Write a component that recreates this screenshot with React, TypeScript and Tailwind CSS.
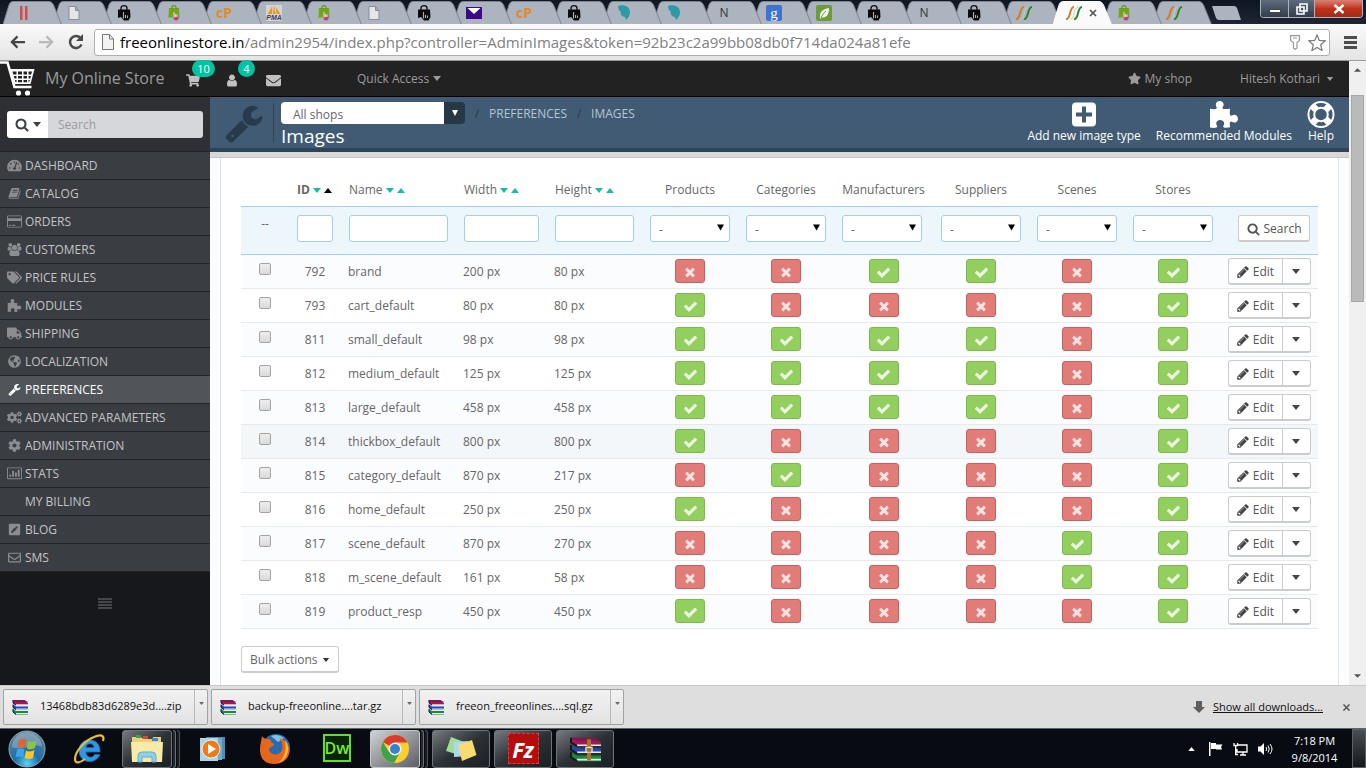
import React from "react";
import {
  FaCog,
  FaCogs,
  FaEnvelope,
  FaGlobeAmericas,
  FaPenSquare,
  FaRegEnvelope,
  FaShoppingCart,
  FaStar,
  FaTachometerAlt,
  FaTags,
  FaTruck,
} from "react-icons/fa";

type IconProps = { className?: string };

/* ---------- glyph icons ---------- */

function glyph(d: string, viewBox = "0 0 1792 1792") {
  return function Glyph({ className }: IconProps) {
    return (
      <svg viewBox={viewBox} fill="currentColor" aria-hidden="true" className={className}>
        <path d={d} />
      </svg>
    );
  };
}

const CheckIcon = glyph(
  "M1671 566q0 40-28 68l-724 724-136 136q-28 28-68 28t-68-28l-136-136-362-362q-28-28-28-68t28-68l136-136q28-28 68-28t68 28l294 295 656-657q28-28 68-28t68 28l136 136q28 28 28 68z"
);
const TimesIcon = glyph(
  "M1490 1322q0 40-28 68l-136 136q-28 28-68 28t-68-28l-294-294-294 294q-28 28-68 28t-68-28l-136-136q-28-28-28-68t28-68l294-294-294-294q-28-28-28-68t28-68l136-136q28-28 68-28t68 28l294 294 294-294q28-28 68-28t68 28l136 136q28 28 28 68t-28 68l-294 294 294 294q28 28 28 68z"
);
const SearchIcon = glyph(
  "M1216 832q0-185-131.500-316.500t-316.500-131.500-316.500 131.500-131.500 316.500 131.500 316.500 316.500 131.500 316.500-131.500 131.500-316.500zm512 832q0 52-38 90t-90 38q-54 0-90-38l-343-342q-179 124-399 124-143 0-273.500-55.500t-225-150-150-225-55.500-273.500 55.500-273.500 150-225 225-150 273.500-55.500 273.500 55.500 225 150 150 225 55.500 273.500q0 220-124 399l343 343q37 37 37 90z",
  "0 64 1792 1792"
);
const UserIcon = glyph(
  "M1536 1399q0 109-62.500 187t-150.500 78h-854q-88 0-150.500-78t-62.500-187q0-85 8.500-160.500t31.500-152 58.500-131 94-89 134.500-34.500q131 128 313 128t313-128q76 0 134.500 34.500t94 89 58.500 131 31.500 152 8.500 160.500zm-256-887q0 159-112.500 271.500t-271.500 112.500-271.500-112.500-112.500-271.500 112.500-271.500 271.500-112.500 271.500 112.500 112.500 271.500z",
  "128 64 1536 1664"
);
const WrenchIcon = glyph(
  "M448 1472q0-26-19-45t-45-19-45 19-19 45 19 45 45 19 45-19 19-45zm644-420l-682 682q-37 37-90 37-52 0-91-37l-106-108q-38-36-38-90 0-53 38-91l681-681q39 98 114.500 173.500t173.500 114.500zm634-435q0 39-23 106-47 134-164.500 217.500t-258.500 83.500q-185 0-316.500-131.500t-131.500-316.500 131.500-316.500 316.500-131.500q58 0 121.500 16.500t107.500 46.500q16 11 16 28t-16 28l-293 169v224l193 107q5-3 79-48.500t135.500-81 70.500-35.500q15 0 23.500 10t8.500 25z"
);
const LifeRingIcon = glyph(
  "M896 0q182 0 348 71t286 191 191 286 71 348-71 348-191 286-286 191-348 71-348-71-286-191-191-286-71-348 71-348 191-286 286-191 348-71zm0 128q-190 0-361 90l194 194q82-28 167-28t167 28l194-194q-171-90-361-90zm-678 1129l194-194q-28-82-28-167t28-167l-194-194q-90 171-90 361t90 361zm678 407q190 0 361-90l-194-194q-82 28-167 28t-167-28l-194 194q171 90 361 90zm0-384q159 0 271.5-112.5t112.5-271.500-112.500-271.500-271.500-112.500-271.500 112.500-112.500 271.500 112.500 271.500 271.500 112.500zm484-217l194 194q90-171 90-361t-90-361l-194 194q28 82 28 167t-28 167z"
);
const BookIcon = glyph(
  "M1703 478q40 57 18 129l-275 906q-19 64-76.500 107.500t-122.500 43.500h-923q-77 0-148.500-53.500t-99.500-131.500q-24-67-2-127 0-4 3-27t4-37q1-8-3-21.500t-3-19.500q2-11 8-21t16.500-23.500 16.500-23.500q23-38 45-91.500t30-91.500q3-10 .5-30t-.5-28q3-11 17-28t17-23q21-36 42-92t25-90q1-9-2.500-32t.5-28q4-13 22-30.500t22-22.500q19-26 42.500-84.500t27.500-96.500q1-8-3-25.500t-2-26.500q2-8 9-18t18-23 17-21q8-12 16.500-30.500t15-35 16-36 19.500-32 26.500-23.500 36-11.500 47.500 5.500l-1 3q38-9 51-9h761q74 0 114 56t18 130l-274 906q-36 119-71.500 153.500t-128.500 34.500h-869q-27 0-38 15-11 16-1 43 24 70 144 70h923q29 0 56-15.500t35-41.500l300-987q7-22 5-57 38 15 59 43zm-1064 2q-4 13 2 22.500t20 9.500h608q13 0 25.500-9.500t16.500-22.500l21-64q4-13-2-22.500t-20-9.500h-608q-13 0-25.500 9.500t-16.500 22.500zm-83 256q-4 13 2 22.500t20 9.500h608q13 0 25.500-9.500t16.500-22.500l21-64q4-13-2-22.500t-20-9.500h-608q-13 0-25.500 9.500t-16.500 22.500z"
);
const PencilIcon = glyph(
  "M491 1536l91-91-235-235-91 91v107h128v128h107zm523-928q0-22-22-22-10 0-17 7l-542 542q-7 7-7 17 0 22 22 22 10 0 17-7l542-542q7-7 7-17zm-54-192l416 416-832 832h-416v-416zm683 96q0 53-37 90l-166 166-416-416 166-165q36-38 90-38 53 0 91 38l235 234q37 39 37 91z",
  "96 128 1580 1580"
);
const UsersIcon = glyph(
  "M657 896q-162 5-265 128h-134q-82 0-138-40.500t-56-118.500q0-353 124-353 6 0 43.500 21t97.500 42.500 119 21.500q67 0 133-23-5 37-5 66 0 159 93 287zm1071 637q0 120-73 189.500t-194 69.500h-874q-121 0-194-69.500t-73-189.500q0-53 3.500-103.500t14-109 26.500-108.500 43-97.500 62-81 85.500-53.500 111.500-20q10 0 43 21.500t73 48 107 48 135 21.500 135-21.500 107-48 73-48 43-21.500q61 0 111.500 20t85.500 53.500 62 81 43 97.500 26.500 108.500 14 109 3.500 103.500zm-1024-1277q0 106-75 181t-181 75-181-75-75-181 75-181 181-75 181 75 75 181zm704 384q0 159-112.500 271.500t-271.500 112.500-271.500-112.500-112.500-271.500 112.500-271.500 271.500-112.500 271.500 112.500 112.500 271.500zm576 225q0 78-56 118.500t-138 40.500h-134q-103-123-265-128 93-128 93-287 0-29-5-66 66 23 133 23 59 0 119-21.500t97.500-42.500 43.500-21q124 0 124 353zm-128-609q0 106-75 181t-181 75-181-75-75-181 75-181 181-75 181 75 75 181z",
  "64 0 1920 1792"
);
const PuzzleIcon = glyph(
  "M0 7.500c2 .6 6.500.8 6.500-.8C6.500 5.500 5.600 5 5.600 3.500 5.600 1.300 7.400 0 9.300 0s3.900 1.300 3.900 3.500c0 1.500-1.200 2-1.200 3.200 0 1.500 3.800 1.200 7.400.7-.4 2.600-.7 6.800.8 6.800 1.200 0 1.700-1 3.100-1 2.200 0 3.700 1.700 3.700 3.800s-1.500 3.800-3.600 3.800c-1.500 0-2-1-3.200-1-1.500 0-1.200 3-.8 5.600-2.500.4-6.700.9-6.700-.8 0-1.200 1-1.600 1-3 0-2-1.800-3.200-3.900-3.200S6 19.600 6 21.600c0 1.400 1 1.800 1 3 0 1.700-4.300 1.400-7 1z",
  "0 0 27 26"
);

function Caret({ className }: IconProps) {
  return (
    <svg viewBox="0 0 8 5" fill="currentColor" aria-hidden="true" className={className}>
      <path d="M0 0h8L4 5z" />
    </svg>
  );
}

function CardIcon({ className }: IconProps) {
  return (
    <svg viewBox="0 0 16 13" fill="currentColor" aria-hidden="true" className={className}>
      <path d="M1.500 0h13A1.500 1.500 0 0 1 16 1.500v10a1.500 1.500 0 0 1-1.500 1.500h-13A1.500 1.500 0 0 1 0 11.500v-10A1.500 1.500 0 0 1 1.500 0zM1 1v2h14V1zM1 6v6h14V6zM2 10h2v1H2zM5 10h4v1H5z" fillRule="evenodd" />
    </svg>
  );
}

function StatsIcon({ className }: IconProps) {
  return (
    <svg viewBox="0 0 16 13" fill="currentColor" aria-hidden="true" className={className}>
      <path d="M1 0h14a1 1 0 0 1 1 1v10.500a1 1 0 0 1-1 1H1a1 1 0 0 1-1-1V1a1 1 0 0 1 1-1zM1 1v10.500h14V1zM2.500 7.500h2V10h-2zM5.500 3.500h2V10h-2zM8.500 5.500h2V10h-2zM11.500 2.500h2V10h-2z" fillRule="evenodd" />
    </svg>
  );
}

function CartLogo({ className }: IconProps) {
  return (
    <svg viewBox="0 0 36 36" aria-hidden="true" className={className}>
      <path d="M0 1.500h7.500l7 24.500h17" fill="none" stroke="#fff" strokeWidth="2.600" />
      <path d="M10 8h24.500l-4 15H14.500z" fill="#fff" />
      <path d="M12.500 10.500h4v3h-3.200zm5.500 0h4v3h-4zm5.500 0h3.500v3h-3.500zm5 0h3.500l-.8 3h-2.700zM13.800 15h2.700v2.500h-2zm4.200 0h4v2.500h-4zm5.500 0h3.500v2.500h-3.500zm5 0h2.500l-.8 2.500h-1.700zM15 19h1.500v2.200h-1zm3 0h4v2.200h-4zm5.500 0h3.500v2.200h-3.500zm5 0h1.300l-.6 2.200h-.7z" fill="#222" />
      <circle cx="18.500" cy="32" r="2.600" fill="#fff" />
      <circle cx="27.500" cy="32" r="2.600" fill="#fff" />
    </svg>
  );
}

/* ---------- browser chrome ---------- */

type Favicon = "bars" | "page" | "bag" | "green" | "cp" | "pma" | "mail" | "teal" | "n" | "google" | "leaf" | "ff";

const tabs: Favicon[] = [
  "bars", "page", "bag", "green", "cp", "pma", "green", "page", "bag", "mail", "cp", "bag",
  "teal", "teal", "n", "google", "leaf", "bag", "n", "bag", "ff", "ff", "green", "ff",
];
const ACTIVE_TAB = 21;

function FaviconMark({ kind }: { kind: Favicon }) {
  if (kind === "cp")
    return <b className="font-['Open_Sans',sans-serif] text-[14px] leading-4 text-[#e08a2c]">cP</b>;
  if (kind === "n")
    return <span className="font-['Open_Sans',sans-serif] text-[12px] leading-4 text-[#333]">N</span>;
  if (kind === "google")
    return (
      <span className="flex h-4 w-4 items-center justify-center rounded-[2px] bg-[#3f72d0] font-['Liberation_Serif',serif] text-[15px] leading-3 text-white">
        g
      </span>
    );
  if (kind === "pma")
    return (
      <span className="flex h-4 w-4 flex-col items-center bg-[#d4d4d4]">
        <svg viewBox="0 0 16 10" className="h-[9px] w-4" aria-hidden="true">
          <path d="M1 10 6 1v9zM7 10 8 0l2 10zM11 10l-1-8 5 8z" fill="#e8961e" />
        </svg>
        <b className="font-['Liberation_Sans',sans-serif] text-[7px] italic leading-[7px] text-[#3c3f66]">PMA</b>
      </span>
    );
  return (
    <svg viewBox="0 0 16 16" className="h-4 w-4" aria-hidden="true">
      {kind === "bars" && <path d="M4 1h2.500v14H4zM9 1h2.500v14H9z" fill="#d9484c" />}
      {kind === "page" && (
        <path d="M3 1.500h6.500l3.500 4v9H3zM9.500 1.500v4H13" fill="#e4e6e9" stroke="#8a8d91" />
      )}
      {kind === "bag" && (
        <>
          <path d="M2 4.500h12l.5 7.500-2 3.500H8L5 12l-3 1z" fill="#0b0b0d" />
          <path d="M5 5.500V3a3 2.300 0 0 1 6 0v2.500" fill="none" stroke="#0b0b0d" strokeWidth="1.300" />
          <path d="M7.500 7v6.500M9.500 10v3M11.500 10.500v2.500" stroke="#a9adb6" strokeWidth="1.100" />
        </>
      )}
      {kind === "green" && (
        <>
          <path d="M3 3h10l.5 9.500h-11z" fill="#73a51c" />
          <path d="M6 4V2a2 1.500 0 0 1 4 0v2" fill="none" stroke="#5c861a" />
          <circle cx="10" cy="12.800" r="2.600" fill="#b8467c" />
          <path d="M8 7v5.500M9.500 9v3M11 9.500V12" stroke="#e7d3c5" strokeWidth="1.200" />
        </>
      )}
      {kind === "mail" && (
        <>
          <path d="M0 2h16v12H0z" fill="#3d0a86" />
          <path d="m1.500 3 6.500 6 6.500-6z" fill="#fff" />
        </>
      )}
      {kind === "teal" && (
        <path d="M2 1c6-2 12 1 12 6 0 4-2 6-4 8l-1-3C5 11 4 9 5 7 3 6 2 3 2 1z" fill="#2d9ba6" />
      )}
      {kind === "leaf" && (
        <>
          <rect width="16" height="16" rx="2" fill="#6c9d3c" />
          <path d="M4 13C3 6 8 4 13 3c0 6-2 10-7 9.500L4 14z" fill="#f1f5ea" />
          <path d="M5 13c1-3 3-5 5-7" fill="none" stroke="#6c9d3c" />
        </>
      )}
      {kind === "ff" && (
        <>
          <path d="M5 14c4 0 2-11 7-12" fill="none" stroke="#c9ccc4" />
          <path d="M0 14c5 1 3-12 8-12" fill="none" stroke="#d67b1f" strokeWidth="2" />
          <path d="M8 14c5 1 3-12 8-12" fill="none" stroke="#2c8233" strokeWidth="2" />
        </>
      )}
    </svg>
  );
}

function TabStrip() {
  return (
    <div className="flex h-6 shrink-0 justify-between bg-linear-to-b from-[#0f1622] to-[#1d2634]">
      <div className="isolate flex pl-[3px]">
        {tabs.map((kind, i) => {
          const active = i === ACTIVE_TAB;
          return (
            <button
              key={i}
              type="button"
              aria-label={`Tab ${i + 1}`}
              style={{ zIndex: active ? 60 : 40 - i }}
              className="relative flex h-6 w-[50px] shrink-0 items-center pl-[13px] pt-0.5"
            >
              <svg viewBox="0 0 59 24" className="absolute left-0 top-0 h-6 w-[59px]" aria-hidden="true">
                <path
                  d="M0 24.500 6 5Q7 1.500 10 1.500h36q3 0 4.500 3.500l8 19.500"
                  fill={active ? "#fafafa" : "#abb4bf"}
                  stroke={active ? "#fafafa" : "#7d8691"}
                />
              </svg>
              <span className="relative flex w-4 justify-center">
                <FaviconMark kind={kind} />
              </span>
              {active && (
                <svg viewBox="0 0 8 8" className="relative ml-[7px] h-2 w-2" aria-hidden="true">
                  <path d="m1 1 6 6M7 1 1 7" stroke="#555" strokeWidth="1.700" />
                </svg>
              )}
            </button>
          );
        })}
        <button type="button" aria-label="New tab" className="ml-2 mt-1.5 h-3.5 w-[30px]">
          <svg viewBox="0 0 30 14" className="h-3.5 w-[30px]" aria-hidden="true">
            <path d="M1 0h22q2 0 3 2l4 12H8q-2 0-3-2z" fill="#acb4bf" />
          </svg>
        </button>
      </div>
      <div className="mr-[3px] flex h-[18px] overflow-hidden rounded-b border border-t-0 border-[#aab3bf]">
        <button type="button" aria-label="Minimize" className="flex w-7 items-end justify-center border-r border-[#aab3bf] bg-linear-to-b from-[#5f6c7b] to-[#333e4d] pb-1">
          <span className="h-1 w-3 border border-[#444] bg-white" />
        </button>
        <button type="button" aria-label="Restore" className="flex w-[26px] items-center justify-center border-r border-[#aab3bf] bg-linear-to-b from-[#5f6c7b] to-[#333e4d]">
          <svg viewBox="0 0 12 12" className="h-3 w-3" aria-hidden="true">
            <path d="M4 1h7v7H4zM1 4h7v7H1z" fill="#4a5564" stroke="#fff" strokeWidth="1.600" />
          </svg>
        </button>
        <button type="button" aria-label="Close window" className="flex w-[47px] items-center justify-center bg-linear-to-b from-[#d98073] via-[#c0321c] to-[#a52a14]">
          <svg viewBox="0 0 12 10" className="h-2.5 w-3" aria-hidden="true">
            <path d="m1.500 1 9 8M10.500 1l-9 8" stroke="#fff" strokeWidth="2.400" />
          </svg>
        </button>
      </div>
    </div>
  );
}

function AddressBar() {
  return (
    <div className="flex h-[37px] shrink-0 items-center border-b border-[#9b9b9b] bg-linear-to-b from-[#fafafa] to-[#e4e4e4] pl-2.5 pr-[9px]">
      <button type="button" aria-label="Back" className="mr-3.5">
        <svg viewBox="0 0 16 14" className="h-3.5 w-[15px]" fill="none" stroke="#454545" strokeWidth="2.400" aria-hidden="true">
          <path d="M8 1 2 7l6 6M2 7h14" />
        </svg>
      </button>
      <button type="button" aria-label="Forward" className="mr-3.5">
        <svg viewBox="0 0 16 14" className="h-3.5 w-[15px]" fill="none" stroke="#b9b9b9" strokeWidth="2.400" aria-hidden="true">
          <path d="m8 1 6 6-6 6M14 7H0" />
        </svg>
      </button>
      <button type="button" aria-label="Reload" className="mr-2.5">
        <svg viewBox="0 0 16 16" className="h-4 w-4" fill="none" stroke="#4a4a4a" strokeWidth="2.500" aria-hidden="true">
          <path d="M13.500 10.500A6 6 0 1 1 12.500 4" />
          <path d="M15 0v7H8z" fill="#4a4a4a" stroke="none" />
        </svg>
      </button>
      <div className="flex h-[27px] min-w-0 flex-1 items-center rounded-[3px] border border-[#aeaeae] bg-white px-[7px]">
        <svg viewBox="0 0 12 16" className="mr-1.5 h-4 w-3 shrink-0" fill="#f3f3f3" stroke="#777" aria-hidden="true">
          <path d="M.5.500h7l4 4.500v10.500H.500zM7.500.500V5h4" />
        </svg>
        <div className="flex-1 truncate font-['Open_Sans','Noto_Sans',sans-serif] text-[15px] leading-5 text-[#808080]">
          <span className="text-black">freeonlinestore.in</span>
          /admin2954/index.php?controller=AdminImages&amp;token=92b23c2a99bb08db0f714da024a81efe
        </div>
        <svg viewBox="0 0 10 15" className="mr-2 h-[15px] w-2.5" fill="none" stroke="#999" strokeWidth="1.200" aria-hidden="true">
          <path d="M.6.600h8.800v4.800L7 7.500v5.500L5 14.400 3.500 13V7.500L.6 5.400zM3 3h4" />
        </svg>
        <svg viewBox="0 0 18 17" className="-mr-1 h-[17px] w-[18px]" fill="none" stroke="#7a7a7a" strokeWidth="1.200" aria-hidden="true">
          <path d="m9 1 2.300 5.400 5.900.5-4.500 3.900 1.400 5.700L9 13.500l-5.100 3 1.400-5.700L.8 6.900l5.900-.5z" />
        </svg>
      </div>
      <button type="button" aria-label="Menu" className="ml-3.5 flex w-[13px] flex-col gap-0.5">
        <span className="h-[3px] bg-[#4d4d4d]" />
        <span className="h-[3px] bg-[#4d4d4d]" />
        <span className="h-[3px] bg-[#4d4d4d]" />
      </button>
    </div>
  );
}

/* ---------- admin page ---------- */

function TopBar() {
  return (
    <header className="flex h-9 shrink-0 items-center border-b border-black bg-[#222] text-[12px] text-[#9b9b9b]">
      <CartLogo className="h-9 w-9" />
      <a href="#" className="ml-[9px] w-[141px] pb-0.5 text-[16px] leading-6">My Online Store</a>
      <a href="#" aria-label="Orders" className="relative w-10">
        <FaShoppingCart className="mt-1 h-[13px] w-3.5 text-[#c0c0c0]" />
        <span className="absolute -top-2.5 left-1.5 flex h-[17px] w-[23px] items-center justify-center rounded-full bg-[#00c4a2] text-[11px] leading-4 text-white">
          10
        </span>
      </a>
      <a href="#" aria-label="Customers" className="relative w-10">
        <UserIcon className="mt-1 h-[13px] w-3 text-[#c0c0c0]" />
        <span className="absolute -top-2.5 left-3 flex h-[17px] w-[17px] items-center justify-center rounded-full bg-[#00c4a2] text-[11px] leading-4 text-white">
          4
        </span>
      </a>
      <a href="#" aria-label="Messages" className="mr-[76px]">
        <FaEnvelope className="mt-1 h-[15px] w-[15px] text-[#c0c0c0]" />
      </a>
      <button type="button" className="flex items-center gap-1">
        Quick Access <Caret className="h-[5px] w-2" />
      </button>
      <a href="#" className="ml-auto flex items-center gap-1">
        <FaStar className="h-[13px] w-[13px]" /> My shop
      </a>
      <button type="button" className="ml-12 mr-[15px] flex items-center gap-1.5">
        Hitesh Kothari <Caret className="h-1 w-2" />
      </button>
    </header>
  );
}

type MenuEntry = { label: string; icon?: React.ComponentType<IconProps> };

const menu: MenuEntry[] = [
  { label: "DASHBOARD", icon: FaTachometerAlt },
  { label: "CATALOG", icon: BookIcon },
  { label: "ORDERS", icon: CardIcon },
  { label: "CUSTOMERS", icon: UsersIcon },
  { label: "PRICE RULES", icon: FaTags },
  { label: "MODULES", icon: PuzzleIcon },
  { label: "SHIPPING", icon: FaTruck },
  { label: "LOCALIZATION", icon: FaGlobeAmericas },
  { label: "PREFERENCES", icon: WrenchIcon },
  { label: "ADVANCED PARAMETERS", icon: FaCogs },
  { label: "ADMINISTRATION", icon: FaCog },
  { label: "STATS", icon: StatsIcon },
  { label: "MY BILLING" },
  { label: "BLOG", icon: FaPenSquare },
  { label: "SMS", icon: FaRegEnvelope },
];

function Sidebar() {
  return (
    <aside className="flex w-[210px] shrink-0 flex-col bg-[#17181c]">
      <div className="flex h-[55px] shrink-0 border-b border-[#222429] bg-[#2e3035] px-[7px] pt-3.5">
        <div className="flex h-[27px] w-full overflow-hidden rounded-[3px]">
          <button type="button" aria-label="Search scope" className="flex w-[41px] items-center justify-center gap-1 bg-white text-[#3c3f44]">
            <SearchIcon className="h-3.5 w-3.5" />
            <Caret className="h-[5px] w-2" />
          </button>
          <input
            aria-label="Search"
            placeholder="Search"
            className="min-w-0 flex-1 bg-[#d6d7da] px-2.5 text-[12px] text-[#555] placeholder:text-[#9a9b9e]"
          />
        </div>
      </div>
      <nav>
        <ul>
          {menu.map(({ label, icon: Icon }) => {
            const active = label === "PREFERENCES";
            return (
              <li key={label}>
                <a
                  href="#"
                  className={
                    active
                      ? "flex h-7 items-center border-b border-[#222429] bg-[#515459] pl-[7px] text-[12px] text-white"
                      : "flex h-7 items-center border-b border-[#222429] bg-[#3a3d42] pl-[7px] text-[12px] text-[#c3c4c6]"
                  }
                >
                  <span className="mr-[3px] flex w-[15px] justify-center">
                    {Icon && <Icon className={active ? "h-[13px] w-[15px]" : "h-[13px] w-[15px] text-[#8b8d90]"} />}
                  </span>
                  {label}
                </a>
              </li>
            );
          })}
        </ul>
      </nav>
      <button type="button" aria-label="Collapse menu" className="mx-auto mt-[26px] flex w-3.5 flex-col gap-px">
        <span className="h-0.5 bg-[#45474b]" />
        <span className="h-0.5 bg-[#45474b]" />
        <span className="h-0.5 bg-[#45474b]" />
        <span className="h-0.5 bg-[#45474b]" />
      </button>
    </aside>
  );
}

function PageHeader() {
  return (
    <div className="flex h-[55px] shrink-0 border-b-4 border-[#2f4456] bg-[#405b73] text-white">
      <div className="my-1.5 flex w-16 shrink-0 items-center justify-center border-r border-[#2f4456] pl-1">
        <WrenchIcon className="h-10 w-10 text-[#273a4b]" />
      </div>
      <div className="ml-[7px] mt-1">
        <div className="flex items-center text-[12px] leading-[22px]">
          <div className="relative flex h-[22px]">
            <select
              aria-label="Shop"
              className="h-[22px] w-[184px] appearance-none rounded-[4px] border-r-[21px] border-[#263846] bg-white pl-3 pt-0.5 text-[12px] text-[#666]"
            >
              <option>All shops</option>
            </select>
            <svg viewBox="0 0 6 6" className="pointer-events-none absolute right-[7px] top-2 h-1.5 w-1.5 fill-white" aria-hidden="true">
              <path d="M0 0h6L3 6z" />
            </svg>
          </div>
          <span className="w-6 pt-0.5 text-center text-[#273a4b]">/</span>
          <a href="#" className="pt-0.5 text-[#b6c6d3]">PREFERENCES</a>
          <span className="w-6 pt-0.5 text-center text-[#273a4b]">/</span>
          <span className="pt-0.5 text-[#b6c6d3]">IMAGES</span>
        </div>
        <h1 className="text-[19px] leading-[22px]">Images</h1>
      </div>
      <div className="ml-auto mr-3.5 flex gap-[15px] pt-1 text-[12px] leading-4">
        <button type="button" className="flex flex-col items-center">
          <svg viewBox="0 0 26 26" className="h-[27px] w-[26px]" aria-hidden="true">
            <path d="M5 1h16a4 4 0 0 1 4 4v16a4 4 0 0 1-4 4H5a4 4 0 0 1-4-4V5a4 4 0 0 1 4-4zm6 4v6H5v4h6v6h4v-6h6v-4h-6V5z" fill="#fff" fillRule="evenodd" />
          </svg>
          Add new image type
        </button>
        <button type="button" className="flex flex-col items-center">
          <PuzzleIcon className="h-[27px] w-7" />
          Recommended Modules
        </button>
        <button type="button" className="flex flex-col items-center">
          <LifeRingIcon className="h-[27px] w-7" />
          Help
        </button>
      </div>
    </div>
  );
}

type ImageType = { id: number; name: string; width: number; height: number; flags: string };

/* flags: products, categories, manufacturers, suppliers, scenes, stores */
const imageTypes: ImageType[] = [
  { id: 792, name: "brand", width: 200, height: 80, flags: "001101" },
  { id: 793, name: "cart_default", width: 80, height: 80, flags: "100001" },
  { id: 811, name: "small_default", width: 98, height: 98, flags: "111101" },
  { id: 812, name: "medium_default", width: 125, height: 125, flags: "111101" },
  { id: 813, name: "large_default", width: 458, height: 458, flags: "111101" },
  { id: 814, name: "thickbox_default", width: 800, height: 800, flags: "100001" },
  { id: 815, name: "category_default", width: 870, height: 217, flags: "010001" },
  { id: 816, name: "home_default", width: 250, height: 250, flags: "100001" },
  { id: 817, name: "scene_default", width: 870, height: 270, flags: "000011" },
  { id: 818, name: "m_scene_default", width: 161, height: 58, flags: "000011" },
  { id: 819, name: "product_resp", width: 450, height: 450, flags: "100001" },
];

const flagColumns = ["Products", "Categories", "Manufacturers", "Suppliers", "Scenes", "Stores"];
const sortColumns = ["ID", "Name", "Width", "Height"];

function SortArrows({ selected }: { selected: boolean }) {
  return (
    <span className="ml-[3px] inline-flex gap-[3px] align-middle">
      <svg viewBox="0 0 8 5" className="h-[5px] w-2 fill-[#18bf9f]" aria-hidden="true">
        <path d="M0 0h8L4 5z" />
      </svg>
      <svg viewBox="0 0 8 5" className={selected ? "h-[5px] w-2 fill-black" : "h-[5px] w-2 fill-[#18bf9f]"} aria-hidden="true">
        <path d="M0 5h8L4 0z" />
      </svg>
    </span>
  );
}

function StatusButton({ on, label }: { on: boolean; label: string }) {
  return (
    <button
      type="button"
      aria-label={label}
      className={
        on
          ? "mx-auto flex h-6 w-[30px] items-center justify-center rounded-[3px] border border-[#7fb84d] bg-[#92cf5e] text-[#edf8e3]"
          : "mx-auto flex h-6 w-[30px] items-center justify-center rounded-[3px] border border-[#c9605b] bg-[#e27c79] text-[#fbe3e2]"
      }
    >
      {on ? <CheckIcon className="mt-0.5 h-[15px] w-[15px]" /> : <TimesIcon className="mt-0.5 h-3.5 w-3.5" />}
    </button>
  );
}

function ImagesTable() {
  return (
    <table className="w-full table-fixed border-separate border-spacing-0 text-[12px] leading-[18px] text-[#666]">
      <colgroup>
        <col className="w-[48px]" />
        <col className="w-[52px]" />
        <col className="w-[115px]" />
        <col className="w-[91px]" />
        <col className="w-[95px]" />
        <col className="w-[96px]" />
        <col className="w-[96px]" />
        <col className="w-[99px]" />
        <col className="w-[96px]" />
        <col className="w-[96px]" />
        <col className="w-[96px]" />
        <col className="w-[97px]" />
      </colgroup>
      <thead>
        <tr className="h-[49px] whitespace-nowrap align-bottom">
          <th className="border-b border-[#a0d0eb]" />
          {sortColumns.map((c) => (
            <th
              key={c}
              className={
                c === "ID"
                  ? "border-b border-[#a0d0eb] px-2 pb-[7px] text-left font-bold"
                  : "border-b border-[#a0d0eb] px-2 pb-[7px] text-left font-normal"
              }
            >
              {c}
              <SortArrows selected={c === "ID"} />
            </th>
          ))}
          {flagColumns.map((c) => (
            <th key={c} className="border-b border-[#a0d0eb] px-2 pb-[7px] text-center font-normal">
              {c}
            </th>
          ))}
          <th className="border-b border-[#a0d0eb]" />
        </tr>
        <tr className="h-12 bg-[#ecf6fb] align-top">
          <td className="border-b border-[#a0d0eb] pt-2 text-center">--</td>
          {sortColumns.map((c) => (
            <td key={c} className="border-b border-[#a0d0eb] px-2 pt-2">
              <input
                aria-label={`Filter by ${c}`}
                className="block h-[27px] w-full rounded-[3px] border border-[#a0d0eb] bg-white px-2"
              />
            </td>
          ))}
          {flagColumns.map((c) => (
            <td key={c} className="border-b border-[#a0d0eb] px-2 pt-2">
              <div className="relative w-20">
                <select
                  aria-label={`Filter by ${c}`}
                  className="block h-[27px] w-full appearance-none rounded-[3px] border border-[#a0d0eb] bg-white pl-2 pt-0.5"
                >
                  <option>-</option>
                </select>
                <svg viewBox="0 0 7 6" className="pointer-events-none absolute right-1.5 top-[9px] h-[7px] w-[7px] fill-black" aria-hidden="true">
                  <path d="M0 0h7L3.500 6z" />
                </svg>
              </div>
            </td>
          ))}
          <td className="border-b border-[#a0d0eb] px-2 pt-2">
            <button
              type="button"
              className="ml-auto flex h-[27px] w-[72px] items-center justify-center gap-1 rounded-[3px] border border-b-2 border-[#ccc] bg-white pt-0.5 text-[#555]"
            >
              <SearchIcon className="h-[13px] w-[13px]" /> Search
            </button>
          </td>
        </tr>
      </thead>
      <tbody>
        {imageTypes.map((t, i) => (
          <tr
            key={t.id}
            className={t.id === 814 ? "h-[34px] bg-[#f4f7f9]" : i % 2 === 0 ? "h-[34px] bg-[#fbfcfe]" : "h-[34px] bg-white"}
          >
            <td className="border-b border-[#e6e9ed] pb-1.5 text-center">
              <input
                type="checkbox"
                aria-label={`Select ${t.name}`}
                className="mx-auto block h-3 w-3 appearance-none rounded-[2px] border border-[#a3a3a3] bg-linear-to-b from-[#eee] to-[#dadada]"
              />
            </td>
            <td className="border-b border-[#e6e9ed] px-2 text-center">{t.id}</td>
            <td className="border-b border-[#e6e9ed] px-[7px]">{t.name}</td>
            <td className="border-b border-[#e6e9ed] px-[7px]">{t.width} px</td>
            <td className="border-b border-[#e6e9ed] px-[7px]">{t.height} px</td>
            {flagColumns.map((c, k) => (
              <td key={c} className="border-b border-[#e6e9ed] pt-1 align-top">
                <StatusButton on={t.flags[k] === "1"} label={`${c}: ${t.name}`} />
              </td>
            ))}
            <td className="border-b border-[#e6e9ed] px-[7px]">
              <div className="flex h-[27px] rounded-[3px] border border-b-2 border-[#ccc] bg-white text-[#555]">
                <button type="button" className="flex flex-1 items-center justify-center gap-1 border-r border-[#ccc] pt-0.5">
                  <PencilIcon className="h-3 w-3 text-[#444]" /> Edit
                </button>
                <button type="button" aria-label={`More actions for ${t.name}`} className="flex w-[27px] items-center justify-center pr-0.5 text-[#444]">
                  <Caret className="h-[5px] w-2" />
                </button>
              </div>
            </td>
          </tr>
        ))}
      </tbody>
    </table>
  );
}

function ScrollBar() {
  return (
    <div className="flex w-[17px] shrink-0 flex-col items-center bg-[#f0f0f0] py-[7px]" aria-hidden="true">
      <svg viewBox="0 0 8 4" className="h-1 w-[7px] fill-[#505050]">
        <path d="M0 4h8L4 0z" />
      </svg>
      <div className="mt-[23px] h-[207px] w-[13px] border border-[#a8a8a8] bg-[#bababa]" />
      <svg viewBox="0 0 8 4" className="mt-auto h-1 w-[7px] fill-[#505050]">
        <path d="M0 0h8L4 4z" />
      </svg>
    </div>
  );
}

/* ---------- downloads shelf and taskbar ---------- */

function BooksIcon({ className, belt }: IconProps & { belt?: boolean }) {
  return (
    <svg viewBox="0 0 16 16" className={className} preserveAspectRatio="none" aria-hidden="true">
      <path d="M1 1h11l4 3v2H4L1 4z" fill="#a5165a" />
      <path d="M1 1h11l4 2H4z" fill="#7c1b48" />
      <path d="M1 5.500 4 7.500h12v3H4L1 8.500z" fill="#2347b8" />
      <path d="M1 10 4 12h12v3.500H4L1 13z" fill="#188a3d" />
      <path d="M4 5.200h12v1H4zM4 9.500h12v1H4zM4 14h12v1H4z" fill="#e8e8e8" />
      <path d="M1 1v3l3 2.200M1 5.500v3l3 2.200M1 10v3l3 2.500" fill="none" stroke="#181818" />
      {belt && <path d="M9 2h2v13H9z" fill="#b0702a" />}
      {belt && <path d="M8.500 7h3v3h-3z" fill="none" stroke="#e8e0d0" strokeWidth=".7" />}
    </svg>
  );
}

const downloads = ["13468bdb83d6289e3d....zip", "backup-freeonline....tar.gz", "freeon_freeonlines....sql.gz"];

function DownloadShelf() {
  return (
    <div className="flex h-[43px] shrink-0 items-center border-t border-[#c8c8c8] bg-[#dedede] pl-[3px] pr-4 text-[11px] text-[#111]">
      {downloads.map((d) => (
        <div key={d} className="mr-[3px] flex h-9 w-[205px] rounded-[2px] border border-[#a2a2a2] bg-linear-to-b from-[#f2f2f2] to-[#e2e2e2]">
          <button type="button" className="flex min-w-0 flex-1 items-center whitespace-nowrap pb-px pl-2">
            <BooksIcon className="mr-3 h-4 w-4 shrink-0" />
            {d}
          </button>
          <button type="button" aria-label={`Options for ${d}`} className="flex w-[13px] justify-center border-l border-[#b8b8b8] pt-3 text-[#666]">
            <Caret className="h-[3px] w-[5px]" />
          </button>
        </div>
      ))}
      <svg viewBox="0 0 12 12" className="ml-auto mr-2 h-3 w-3 fill-[#5f5f5f]" aria-hidden="true">
        <path d="M3 0h6v6h3l-6 6-6-6h3z" />
      </svg>
      <a href="#" className="underline">Show all downloads...</a>
      <button type="button" aria-label="Close downloads" className="ml-5">
        <svg viewBox="0 0 8 8" className="h-[7px] w-[7px]" aria-hidden="true">
          <path d="m.5.500 7 7M7.500.500l-7 7" stroke="#555" strokeWidth="1.700" />
        </svg>
      </button>
    </div>
  );
}

function StartOrb() {
  return (
    <svg viewBox="0 0 38 38" className="h-[38px] w-[38px]" aria-hidden="true">
      <defs>
        <radialGradient id="orb" cx="50%" cy="90%" r="85%">
          <stop offset="0" stopColor="#5cd0f4" />
          <stop offset=".4" stopColor="#1c6fae" />
          <stop offset="1" stopColor="#5d7f98" />
        </radialGradient>
      </defs>
      <circle cx="19" cy="19" r="18" fill="url(#orb)" stroke="#8fa9b8" />
      <path d="M4 17a15 15 0 0 1 30 0C26 12 14 22 4 17z" fill="#fff" opacity=".25" />
      <path d="M11 10q4-2 7.500 0l-1.500 8q-4-2-7.500 0z" fill="#e8602a" />
      <path d="M20 11q4 2 8.500-.5L27 18q-4 2.500-8 .5z" fill="#8cc63e" />
      <path d="M9 19.500q4-2 7.500 0l-1.500 8q-4-2-7.500 0z" fill="#3ba6e4" />
      <path d="M18 20.500q4 2 8.500-.5L25 28q-4 2-8.500 0z" fill="#fcc527" />
    </svg>
  );
}

function IeIcon() {
  return (
    <svg viewBox="0 0 34 34" className="h-[34px] w-[34px]" aria-hidden="true">
      <path d="M28 20H14c0 6 7 6.500 8.500 2.500H28C24 33 7 32 7 18.500 7 4 29 4 28 20zM14 15.500h8c-.5-5-7.500-5-8 0z" fill="#2f98e2" stroke="#1766b0" strokeWidth=".8" fillRule="evenodd" />
      <path d="M31 9c2-6-3-7-9-4C12 9 3 20 3 27c0 5 5 4 10 0" fill="none" stroke="#ecbb35" strokeWidth="2.200" />
    </svg>
  );
}

function FoldersIcon() {
  return (
    <svg viewBox="0 0 34 30" className="h-[30px] w-[34px]" aria-hidden="true">
      <path d="M2 3h9l2 2h10V3h8v24H2z" fill="#e9d07a" />
      <path d="M6 1h5v3H6z" fill="#3fa04c" />
      <path d="M13 2h5v3h-5z" fill="#d24a3c" />
      <path d="M22 4h6v3h-6z" fill="#3f86d8" />
      <path d="M1 8h32l-1 20H2z" fill="#f7e9a6" />
      <path d="M8 28v-6q0-4 4-4h10q4 0 4 4v6h-4v-5H12v5z" fill="#8fd0ea" stroke="#5faed0" />
    </svg>
  );
}

function PlayerIcon() {
  return (
    <svg viewBox="0 0 28 28" className="h-7 w-7" aria-hidden="true">
      <path d="M7 2h19v22H9z" fill="#4b8fb5" />
      <path d="M4 3h19v22H4z" fill="#69aed0" />
      <path d="M1 3h18v23H1z" fill="#a9d6e8" />
      <circle cx="12" cy="14" r="9" fill="#ee7a1d" stroke="#fff" strokeWidth=".8" />
      <path d="M9 9v10l8-5z" fill="#fff" />
    </svg>
  );
}

function FirefoxIcon() {
  return (
    <svg viewBox="0 0 32 32" className="h-8 w-8" aria-hidden="true">
      <circle cx="17" cy="15" r="14" fill="#2a6ab0" />
      <path d="M12 3q7-3 13 2l-6 4z" fill="#7cc4e8" />
      <path d="M3 3c1 2 3 3 6 3 3 1 4 2 3 4 3 0 4 1 2 3-3 1-5 3-3 6 3 4 10 3 12-2 1-5 0-9-3-12 9 2 12 10 10 16C27 33 8 34 3 25-1 17 2 11 3 3z" fill="#e8661c" />
      <path d="M26 7c5 6 5 18-7 23.500 6-5 9-13 7-23.500z" fill="#f9b933" />
    </svg>
  );
}

function ChromeIcon() {
  return (
    <svg viewBox="0 0 30 30" className="h-[30px] w-[30px]" aria-hidden="true">
      <circle cx="15" cy="15" r="14" fill="#fbd02d" />
      <path d="M15 15 2.900 8A14 14 0 0 1 27.500 8.500H15z" fill="#dc3b2c" />
      <path d="M2.900 8A14 14 0 0 0 14 29l6-10.500L15 15 9 18z" fill="#3da24b" />
      <circle cx="15" cy="15" r="6.500" fill="#f3f3f3" />
      <circle cx="15" cy="15" r="5" fill="#3b7fd0" />
    </svg>
  );
}

function NotesIcon() {
  return (
    <svg viewBox="0 0 32 26" className="h-[26px] w-8" aria-hidden="true">
      <path d="m6 1 13 5-5 13-13-4z" fill="#9fdc98" />
      <path d="m9 6 14-1 1 15-15 1z" fill="#a9d8f5" />
      <path d="m13 9 14-5 4.500 15L17 25z" fill="#f8dc70" />
    </svg>
  );
}

function TaskButton({ label, children, stacked, bright }: { label: string; children: React.ReactNode; stacked?: boolean; bright?: boolean }) {
  return (
    <button type="button" aria-label={label} className="mr-1 flex h-[38px] w-[58px] shrink-0 gap-px">
      <span
        className={
          bright
            ? "flex h-full flex-1 items-center justify-center rounded-[3px] border border-[#c5c8ca] bg-linear-to-br from-[#d0d3d5] to-[#5c6064]"
            : "flex h-full flex-1 items-center justify-center rounded-[3px] border border-[#70757a] bg-linear-to-br from-[#777b80] via-[#2c3136] to-[#1b2025]"
        }
      >
        {children}
      </span>
      {stacked && <span className="h-full w-[3px] rounded-r-[3px] border border-l-0 border-[#6b7075] bg-[#24292e]" />}
      {stacked && <span className="h-full w-[3px] rounded-r-[3px] border border-l-0 border-[#4c5156] bg-[#181c20]" />}
    </button>
  );
}

function PlainTask({ label, children }: { label: string; children: React.ReactNode }) {
  return (
    <button type="button" aria-label={label} className="mr-1 flex h-[38px] w-[58px] shrink-0 items-center justify-center">
      {children}
    </button>
  );
}

function Taskbar() {
  return (
    <footer className="flex h-10 shrink-0 items-center border-t border-[#5a646c] bg-[#080c12] text-white">
      <button type="button" aria-label="Start" className="mr-3.5 pl-2">
        <StartOrb />
      </button>
      <PlainTask label="Internet Explorer"><IeIcon /></PlainTask>
      <TaskButton label="File Explorer" stacked><FoldersIcon /></TaskButton>
      <PlainTask label="Media Player"><PlayerIcon /></PlainTask>
      <PlainTask label="Firefox"><FirefoxIcon /></PlainTask>
      <PlainTask label="Dreamweaver">
        <span className="mb-0.5 flex h-7 w-7 items-center justify-center border-2 border-[#62e027] bg-[#0c2403] text-[16px] font-semibold leading-5 text-[#74ee36]">
          Dw
        </span>
      </PlainTask>
      <TaskButton label="Chrome" stacked bright><ChromeIcon /></TaskButton>
      <TaskButton label="Sticky Notes"><NotesIcon /></TaskButton>
      <TaskButton label="FileZilla">
        <span className="flex h-[31px] w-[31px] items-center justify-center border border-dashed border-[#d84040] bg-[#b50d0d] text-[22px] font-bold italic leading-6">
          Fz
        </span>
      </TaskButton>
      <TaskButton label="WinRAR"><BooksIcon belt className="h-[26px] w-8" /></TaskButton>
      <div className="ml-auto flex h-full items-center">
        <Caret className="mr-3.5 h-1 w-[7px] rotate-180" />
        <svg viewBox="0 0 14 14" className="mr-2.5 h-3.5 w-3.5 fill-white" aria-hidden="true">
          <path d="M0 0h1.500v14H0zM2 1h5v1.500h6.500L12 5l1 2.500H7V7H2z" />
        </svg>
        <svg viewBox="0 0 15 14" className="mr-2.5 h-3.5 w-[15px]" fill="none" stroke="#fff" strokeWidth="1.300" aria-hidden="true">
          <path d="M5 3h9v7H4V7M7 13h6M10 10v3M1 1v2.500h3.500V1M2.700 4v8.500H5" />
        </svg>
        <svg viewBox="0 0 15 14" className="h-3.5 w-[15px]" fill="none" stroke="#fff" aria-hidden="true">
          <path d="M0 4.500h2.500L6 1v12L2.500 9.500H0z" fill="#fff" stroke="none" />
          <path d="M8 5q1.500 2 0 4M10 3.500q2.500 3.500 0 7M12 2q4 5 0 10" />
        </svg>
        <time className="ml-3.5 mr-2.5 w-[55px] text-center text-[11px] leading-[17px]">
          7:18 PM
          <br />
          9/8/2014
        </time>
        <button type="button" aria-label="Show desktop" className="h-full w-3.5 border border-[#5c6166] bg-linear-to-b from-[#4a4f54] to-[#15191d]" />
      </div>
    </footer>
  );
}

export default function App() {
  return (
    <div className="flex h-screen flex-col overflow-hidden bg-white font-['Open_Sans','Noto_Sans',sans-serif]">
      <TabStrip />
      <AddressBar />
      <div className="flex min-h-0 flex-1">
        <div className="flex min-w-0 flex-1 flex-col">
          <TopBar />
          <div className="flex min-h-0 flex-1">
            <Sidebar />
            <main className="flex min-w-0 flex-1 flex-col bg-[#fbfdff]">
              <PageHeader />
              <div className="h-1.5 shrink-0 border-b border-[#c6c6c6] bg-[#d8d8d8]" />
              <section className="mx-2.5 flex-1 border-x border-[#d9e2ec] bg-white px-5">
                <ImagesTable />
                <button
                  type="button"
                  className="mt-[17px] flex h-[27px] items-center gap-1 rounded-[3px] border border-b-2 border-[#ccc] bg-white px-2 pt-0.5 text-[12px] text-[#666]"
                >
                  Bulk actions <Caret className="h-1 w-2 text-[#333]" />
                </button>
              </section>
            </main>
          </div>
        </div>
        <ScrollBar />
      </div>
      <DownloadShelf />
      <Taskbar />
    </div>
  );
}
